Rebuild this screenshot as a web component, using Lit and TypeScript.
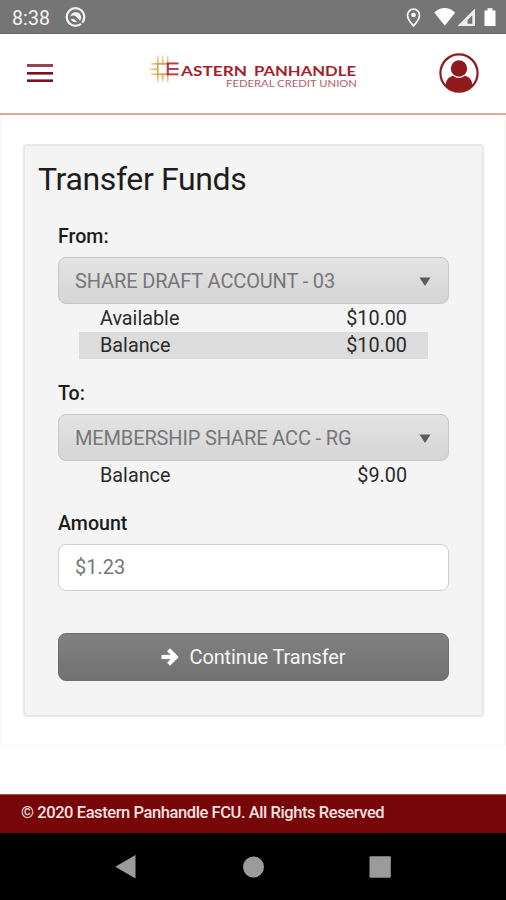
import { LitElement, html, css, svg } from "lit";
import { customElement, property } from "lit/decorators.js";

@customElement("status-bar")
class StatusBar extends LitElement {
  static styles = css`
    :host {
      display: flex;
      justify-content: space-between;
      box-sizing: border-box;
      height: 34px;
      background: #757575;
      border-bottom: 1px solid #666;
      color: #f4f4f4;
      font: 19.5px/37px Roboto, sans-serif;
    }
    .left {
      display: flex;
      padding-left: 12px;
      gap: 15px;
    }
    .time { width: 38px; white-space: nowrap; letter-spacing: 0.1px; }
    svg { display: block; }
  `;
  render() {
    return html`
      <div class="left">
        <span class="time">8:38</span>
        <svg width="22" height="34" viewBox="0 0 22 34">
          <circle cx="10.5" cy="17" r="8.800" fill="none" stroke="#f2f2f2" stroke-width="2.300" />
          <path d="M5.400 16.600a5.500 5.500 0 0 1 10.800.400c0 1.600-.500 2.800-1.300 3.800L10.400 16c-1.500-1-3.300-.800-5 .600z" fill="#f2f2f2" />
          <path d="M5.800 19c1.200 2.800 3.900 3.700 6.400 2.900l-3.300-3.200z" fill="#f2f2f2" />
          <path d="M14.800 21.200l4 4.400" stroke="#757575" stroke-width="1.600" />
        </svg>
      </div>
      <svg width="106" height="34" viewBox="400 0 106 34" fill="#fff">
        <path
          d="M413.500 9.200a6 6 0 0 0-6 6c0 4.300 6 10.600 6 10.600s6-6.300 6-10.600a6 6 0 0 0-6-6z"
          fill="none" stroke="#f4f4f4" stroke-width="1.800"
        />
        <circle cx="413.500" cy="15" r="2.300" />
        <path d="M434.300 12.500Q444.500 3.600 455.200 12.500L444.800 25.800z" />
        <path fill-rule="evenodd" d="M475 8.500V26H457.500zM472.300 15.200L467.500 20V23.800H472.300z" fill="#eee" />
        <path d="M484.500 10.500h3V8.300h5v2.200h3V26h-11z" />
      </svg>
    `;
  }
}

@customElement("app-header")
class AppHeader extends LitElement {
  static styles = css`
    :host {
      display: flex;
      justify-content: space-between;
      box-sizing: border-box;
      height: 81px;
      padding: 0 27px 0 27px;
      background: #fff;
      border-bottom: 2px solid #dfa99b;
    }
    svg { display: block; }
    .logo { margin-left: 14px; }
  `;
  render() {
    return html`
      <svg width="26" height="79" viewBox="27 34 26 79" fill="#7c1020">
        <rect x="27" y="64" width="26" height="3" fill="#974453" />
        <rect x="27" y="72" width="26" height="2.600" />
        <rect x="27" y="79.400" width="26" height="2.600" />
      </svg>
      <svg class="logo" width="212" height="79" viewBox="149 34 212 79" font-family="Lato, sans-serif">
        <defs>
          <linearGradient id="across" x1="150" x2="174" y1="0" y2="0" gradientUnits="userSpaceOnUse">
            <stop offset="0" stop-color="#d9b15c" stop-opacity=".15" />
            <stop offset=".35" stop-color="#d9ac58" />
            <stop offset="1" stop-color="#c98a54" />
          </linearGradient>
          <linearGradient id="down" x1="0" x2="0" y1="55" y2="83" gradientUnits="userSpaceOnUse">
            <stop offset="0" stop-color="#d9b15c" stop-opacity=".3" />
            <stop offset=".3" stop-color="#d9ac58" />
            <stop offset=".75" stop-color="#d9ac58" />
            <stop offset="1" stop-color="#d9b15c" stop-opacity=".3" />
          </linearGradient>
        </defs>
        <g fill="url(#across)">
          ${[63, 68.4, 73.4].map((y) => svg`<rect x=${y === 68.4 ? 151 : 153} y=${y} width=${y === 68.4 ? 9 : 18} height="1.700" />`)}
        </g>
        <g fill="url(#down)">
          ${[159, 163.8, 168.8].map((x) => svg`<rect x=${x} y="55.500" width="1.700" height=${x === 163.8 ? 9 : 27} />`)}
          <rect x="163.800" y="73.500" width="1.700" height="8" />
        </g>
        <g fill="#b0384a">
          <rect x="168.800" y="62.600" width="2" height="12.500" />
          <rect x="169" y="62.500" width="11.500" height="1.900" />
          <rect x="169" y="68" width="11.500" height="1.900" />
          <rect x="169" y="73.400" width="11.500" height="1.900" />
        </g>
        <text x="183" y="75.500" font-size="12.800" font-weight="700" fill="#a51f2b"
          textLength="66" lengthAdjust="spacingAndGlyphs">ASTERN</text>
        <text x="256" y="75.500" font-size="12.800" font-weight="700" fill="#a51f2b"
          textLength="102" lengthAdjust="spacingAndGlyphs">PANHANDLE</text>
        <text x="228" y="86.800" font-size="9.800" fill="#b0606c"
          textLength="131" lengthAdjust="spacingAndGlyphs">FEDERAL CREDIT UNION</text>
      </svg>
      <svg width="40" height="79" viewBox="439 34 40 79">
        <defs>
          <clipPath id="disc"><circle cx="459" cy="73" r="18" /></clipPath>
        </defs>
        <circle cx="459" cy="73" r="18.600" fill="#fff" stroke="#8f1b1f" stroke-width="2.200" />
        <g clip-path="url(#disc)" fill="#8f1b1f">
          <path d="M445.800 94V85c0-5 3-8.400 7.300-9.300q5.900 4.600 11.800 0c4.300.9 7.300 4.300 7.300 9.300v9z" />
        </g>
        <ellipse cx="459" cy="68.500" rx="8.200" ry="8.200" fill="#8f1b1f" />
      </svg>
    `;
  }
}

@customElement("account-picker")
class AccountPicker extends LitElement {
  @property() label = "";
  @property() account = "";
  @property({ attribute: false }) rows: [string, string][] = [];

  static styles = css`
    :host { display: block; font-family: Roboto, sans-serif; }
    .label {
      height: 42px;
      font-size: 19.600px;
      line-height: 43px;
      font-weight: 500;
      color: #1c1c1c;
    }
    .select {
      display: flex;
      align-items: center;
      justify-content: space-between;
      box-sizing: border-box;
      height: 47px;
      padding: 0 17px 0 16px;
      border: 1px solid #c6c6c6;
      border-radius: 8px;
      background: linear-gradient(#e3e3e3, #d5d5d5);
      color: #777;
      font-size: 20px;
      letter-spacing: -0.14px;
      white-space: nowrap;
    }
    .arrow { display: block; }
    .rows { margin: 0 21px; }
    .row {
      display: flex;
      justify-content: space-between;
      padding: 0 21px;
      height: 27.500px;
      line-height: 29px;
      font-size: 19.800px;
      color: #2b2b2b;
    }
    .row:nth-child(even) { background: #dcdcdc; line-height: 27px; }
  `;
  render() {
    return html`
      <div class="label">${this.label}</div>
      <div class="select">
        <span>${this.account}</span>
        <svg class="arrow" width="12" height="10" viewBox="0 0 12 10"><path d="M.5 1.500h11L6 10z" fill="#5c5c5c" /></svg>
      </div>
      <div class="rows">
        ${this.rows.map(([name, value]) => html`<div class="row"><span>${name}</span><span>${value}</span></div>`)}
      </div>
    `;
  }
}

@customElement("app-root")
class AppRoot extends LitElement {
  static styles = css`
    :host {
      display: flex;
      flex-direction: column;
      height: 900px;
      background: #fff;
      font-family: Roboto, sans-serif;
      overflow: hidden;
    }
    .content {
      box-sizing: border-box;
      height: 631px;
      padding: 29px 20px 0 21px;
      border: solid #f9f9f5;
      border-width: 0 2px 1px 2px;
    }
    .card {
      box-sizing: border-box;
      height: 573px;
      padding: 13px 33px 0;
      border: 2px solid #e8e8e8;
      border-radius: 4px;
      background: #f4f4f4;
    }
    .title {
      margin: 0 0 0 -20px;
      height: 56px;
      font-size: 32px;
      line-height: 40px;
      font-weight: 400;
      letter-spacing: -0.36px;
      color: #1d1d1d;
    }
    .to { margin-top: 13px; }
    .amount {
      margin-top: 14px;
      height: 41px;
      font-size: 19.600px;
      line-height: 41px;
      font-weight: 500;
      color: #1c1c1c;
    }
    .field {
      box-sizing: border-box;
      height: 47px;
      padding-left: 16px;
      border: 1px solid #cfcfcf;
      border-radius: 8px;
      background: #fff;
      color: #777;
      font-size: 20px;
      line-height: 45px;
    }
    .button {
      display: flex;
      align-items: center;
      justify-content: center;
      gap: 10px;
      box-sizing: border-box;
      height: 48px;
      margin-top: 42px;
      border: 1px solid #6f6f6f;
      border-radius: 8px;
      background: linear-gradient(#808080, #727272);
      color: #f6f6f6;
      font-size: 20px;
      letter-spacing: -0.12px;
    }
    .footer {
      box-sizing: border-box;
      height: 39px;
      margin-top: 48px;
      padding-left: 21px;
      background: #770609;
      border-top: 1px solid #a45757;
      color: #f3e3e0;
      font-size: 16.500px;
      line-height: 35px;
      font-weight: 500;
      letter-spacing: -0.42px;
      white-space: nowrap;
    }
    .nav { display: block; background: #000; }
  `;
  render() {
    return html`
      <status-bar></status-bar>
      <app-header></app-header>
      <div class="content">
        <div class="card">
          <h1 class="title">Transfer Funds</h1>
          <account-picker
            label="From:"
            account="SHARE DRAFT ACCOUNT - 03"
            .rows=${[["Available", "$10.00"], ["Balance", "$10.00"]]}
          ></account-picker>
          <account-picker
            class="to"
            label="To:"
            account="MEMBERSHIP SHARE ACC - RG"
            .rows=${[["Balance", "$9.00"]]}
          ></account-picker>
          <div class="amount">Amount</div>
          <div class="field">$1.23</div>
          <div class="button">
            <svg width="18" height="18" viewBox="0 0 18 18" fill="none" stroke="#fff" stroke-width="4.200">
              <path d="M0.500 9H14" />
              <path d="M7.500 1.700L14.800 9L7.500 16.300" />
            </svg>
            <span>Continue Transfer</span>
          </div>
        </div>
      </div>
      <div class="footer">© 2020 Eastern Panhandle FCU. All Rights Reserved</div>
      <svg class="nav" width="506" height="67" viewBox="0 833 506 67" fill="#9b9b9b">
        <path d="M115.300 866.800L135.500 855V878.500z" />
        <circle cx="253.500" cy="867" r="10.500" />
        <rect x="369.500" y="856.200" width="21.300" height="21.500" rx="1" />
      </svg>
    `;
  }
}
